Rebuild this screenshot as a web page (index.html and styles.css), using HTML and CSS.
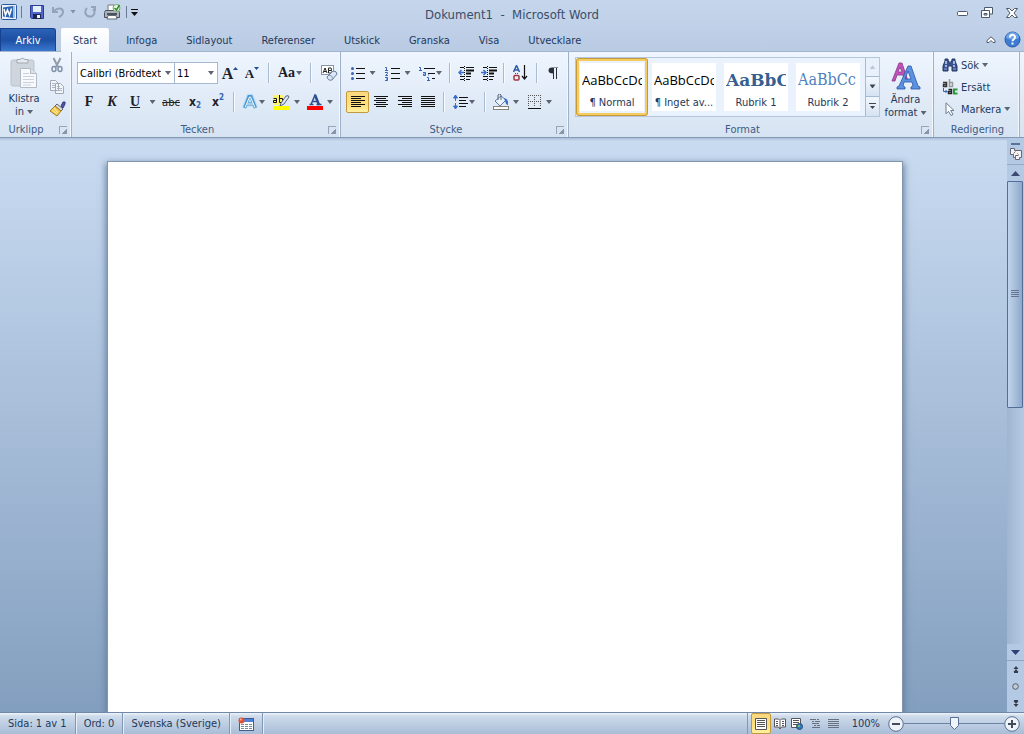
FILE: index.html
```html
<!DOCTYPE html>
<html lang="sv">
<head>
<meta charset="utf-8">
<meta name="viewport" content="width=device-width, initial-scale=1">
<title>Dokument1 - Microsoft Word</title>
<link rel="stylesheet" href="styles.css">
</head>
<body>
<header class="titlebar">
  <div class="quick">
    <button class="app" aria-label="Word"><svg width="16" height="18" viewBox="0 0 16 18"><rect x=".5" y="1.500" width="15" height="15" rx="1" fill="#e9f2fb" stroke="#2b5a9c"/><path d="M2 4.500l10-1.500v12l-10-1.500z" fill="#2c64b4"/><path d="M12 4h2M12 6h2M12 8h2M12 10h2M12 12h2M12 14h2" stroke="#5d8fcd"/><path d="M3 6l1.500 6L6.500 7l2 5L10.500 5.500" fill="none" stroke="#fff" stroke-width="1.500"/></svg></button>
    <span class="qsep"></span>
    <button class="save" aria-label="Spara"><svg width="14" height="14" viewBox="0 0 14 14"><path d="M.5.5h13v13h-12l-1-1z" fill="#5065c8" stroke="#2d3b91"/><path d="M3 1h8v6H3z" fill="#e6effc"/><path d="M3 9h8v5H3z" fill="#1d2752"/><path d="M7 10h3v3H7z" fill="#f2f4ff"/></svg></button>
    <button class="undo" aria-label="Ångra"><svg width="13" height="12" viewBox="0 0 13 12"><path d="M1 1v5h5M2 5C6 1 11 2 11 6c0 3-2 4-4 5" fill="none" stroke="#93a3bc" stroke-width="2"/></svg><i class="dd pale"></i></button>
    <button class="redo" aria-label="Gör om"><svg width="12" height="12" viewBox="0 0 12 12"><path d="M3 2C0 5 1 10 5.500 10.500S12 6 9 3M7 1h4v4" fill="none" stroke="#93a3bc" stroke-width="2"/></svg></button>
    <button class="print" aria-label="Snabbutskrift"><svg width="17" height="16" viewBox="0 0 17 16"><path d="M4 1h6v6H4z" fill="#fff" stroke="#707780"/><path d="M1.500 6.500h13l1 2v5h-15v-5z" fill="#adb3bb" stroke="#4c535c"/><path d="M3 9h10v2H3z" fill="#4a525d"/><path d="M4 11.500h8l1 3.500H3z" fill="#fff" stroke="#626a75"/><circle cx="12.500" cy="4" r="3.500" fill="#eef9e9" stroke="#73a765"/><path d="M10.500 4l2 2 3-5" fill="none" stroke="#2e8b2b" stroke-width="1.500"/></svg></button>
    <span class="qsep"></span>
    <button class="more" aria-label="Anpassa verktygsfältet"><svg width="7" height="7" viewBox="0 0 7 7"><path d="M0 0h7v1H0zM0 3h7L3.500 7z" fill="#111"/></svg></button>
  </div>
  <h1>Dokument1 &nbsp;-&nbsp; Microsoft Word</h1>
  <div class="window">
    <button aria-label="Minimera"><svg width="11" height="11" viewBox="0 0 11 11"><rect x=".5" y="4.500" width="10" height="4" rx="1" fill="#fff" stroke="#4d5968"/></svg></button>
    <button aria-label="Återställ"><svg width="12" height="11" viewBox="0 0 12 11"><path d="M3.500 3.500v-3h8v6.500h-3" fill="#fff" stroke="#4d5968"/><path d="M.5 3.500h8v7h-8z" fill="#fff" stroke="#4d5968"/><path d="M3 6.500h3v1.500H3z" fill="#bfcfe5" stroke="#4d5968"/></svg></button>
    <button aria-label="Stäng"><svg width="12" height="10" viewBox="0 0 12 10"><path d="M.5.5h3L6 3 8.500.5h3L8 5l3.500 4.500h-3L6 7 3.500 9.500h-3L4 5z" fill="#fff" stroke="#4d5968"/></svg></button>
  </div>
</header>

<nav class="tabs">
  <button class="file">Arkiv</button>
  <button class="tab active">Start</button>
  <button class="tab">Infoga</button>
  <button class="tab">Sidlayout</button>
  <button class="tab">Referenser</button>
  <button class="tab">Utskick</button>
  <button class="tab">Granska</button>
  <button class="tab">Visa</button>
  <button class="tab">Utvecklare</button>
  <div class="tabtools">
    <button aria-label="Minimera menyfliksområdet"><svg width="10" height="8" viewBox="0 0 10 8"><path d="M5 .8L9 4.500v2H7L5 4.500l-2 2H1v-2z" fill="#fff" stroke="#4d5968"/></svg></button>
    <button aria-label="Hjälp"><svg width="17" height="17" viewBox="0 0 17 17"><circle cx="8.500" cy="8.500" r="7.500" fill="#3d7bd2" stroke="#265aa8"/><path d="M2 7a6.500 6 0 0 1 13 0q-6 3-13 0z" fill="#6fa2e6"/><path d="M6 6.500C6 3 11 3 11 6.200c0 2-2.500 2-2.500 4" fill="none" stroke="#fff" stroke-width="2"/><path d="M7.500 11.500h2v2h-2z" fill="#fff"/></svg></button>
  </div>
</nav>

<section class="ribbon" aria-label="Start">
  <div class="group clip">
    <div class="clipbody">
      <button class="big paste"><svg width="28" height="32" viewBox="0 0 28 32"><rect x="1" y="3" width="23" height="26" rx="2" fill="#cfd5dc" stroke="#bac1ca"/><path d="M7 6V2.500h3Q12-.5 15 2.500h3V6z" fill="#e6e9ed" stroke="#a2a9b2"/><path d="M10.500 11.500h10l6 5v14h-16z" fill="#f7f9fc" stroke="#b2bac5"/><path d="M20.500 11.500v5h6" fill="#dce2ea" stroke="#b2bac5"/><path d="M13 16.500h6M13 19.500h11M13 22.500h11M13 25.500h11M13 28h8" stroke="#cbd2dc"/></svg><span>Klistra<br>in <i class="dd"></i></span></button>
      <div class="clipside">
        <button aria-label="Klipp ut"><svg width="12" height="16" viewBox="0 0 12 16"><path d="M2.500 1l4.500 9M9.500 1L5 10" stroke="#939dab" stroke-width="2"/><ellipse cx="3" cy="12" rx="2" ry="2.500" fill="none" stroke="#8393ab" stroke-width="1.500"/><ellipse cx="9" cy="12" rx="2" ry="2.500" fill="none" stroke="#8393ab" stroke-width="1.500"/></svg></button>
        <button aria-label="Kopiera"><svg width="16" height="14" viewBox="0 0 16 14"><path d="M1.500.5h5l3 3v7h-8zM6.500 3.500h5l3 3v7h-8z" fill="#f2f5f9" stroke="#a0a9b5"/><path d="M3 3.500h3M3 5.500h3M3 7.500h3M8 6.500h3M8 8.500h5M8 10.500h5" stroke="#aeb6c1"/></svg></button>
        <button aria-label="Hämta format"><svg width="17" height="16" viewBox="0 0 17 16"><path d="M12 5l2-4q3-1 2 2l-2 4z" fill="#4d55a6" stroke="#353c83"/><path d="M8 3l6 5-2 2-6-5z" fill="#dedede" stroke="#61636b"/><path d="M6 5l6 5-4 5-7-5z" fill="#f3c94e" stroke="#a37a24"/><path d="M3 9l5 4M5 7l4 5" stroke="#fff1a4"/></svg></button>
      </div>
    </div>
    <footer><h2>Urklipp</h2><button class="launch" aria-label="Urklipp, mer"></button></footer>
  </div>

  <div class="group font">
    <div class="row font1">
      <label class="combo"><select aria-label="Teckensnitt"><option>Calibri (Brödtext)</option></select></label>
      <label class="combo"><select aria-label="Teckenstorlek"><option>11</option></select></label>
      <button class="serif grow" aria-label="Öka teckenstorlek">A<svg width="5" height="14" viewBox="0 0 5 14"><path d="M0 3h5L2.500 0z" fill="#274b91"/></svg></button>
      <button class="serif shrink" aria-label="Minska teckenstorlek">A<svg width="5" height="14" viewBox="0 0 5 14"><path d="M0 0h5L2.500 3z" fill="#274b91"/></svg></button>
      <span class="sep"></span>
      <button class="serif aa" aria-label="Ändra skiftläge">Aa<i class="dd"></i></button>
      <span class="sep"></span>
      <button class="clear" aria-label="Radera formatering"><svg width="17" height="16" viewBox="0 0 17 16"><rect x=".5" y=".5" width="12" height="9" fill="#fff" stroke="#8895aa"/><path d="M2 8l2-5 2 5M3 6.500h2M7.500 8V3H10q1 1 0 2.500H8h2.500q1 1 0 2.500z" fill="none" stroke="#222"/><path d="M6 12l6-6q4 0 4 3l-5 6q-4 1-5-3z" fill="#dce6f5" stroke="#667b9d"/><path d="M8 10q3 0 4 4" fill="none" stroke="#8095b6"/></svg></button>
    </div>
    <div class="row font2">
      <button class="serif" aria-label="Fet">F</button>
      <button class="serif italic" aria-label="Kursiv">K</button>
      <button class="serif under" aria-label="Understruken">U</button>
      <button aria-label="Understrykningsformat"><i class="dd"></i></button>
      <button class="strike" aria-label="Genomstruken">abc</button>
      <button class="script" aria-label="Nedsänkt">x<sub>2</sub></button>
      <button class="script" aria-label="Upphöjt">x<sup>2</sup></button>
      <span class="sep"></span>
      <button class="g2" aria-label="Texteffekter"><svg width="16" height="16" viewBox="0 0 16 16"><path d="M2.500 14L7 2h2l4.500 12M5 10h6" fill="none" stroke="#a6d8f6" stroke-width="5" stroke-linejoin="round" opacity=".7"/><path d="M2.500 14L7 2.500h2L13.500 14M5 10h6" fill="none" stroke="#4a98d0" stroke-width="3"/><path d="M3 13.500L7.500 3h1L13 13.500M5 10h6" fill="none" stroke="#fff"/></svg><i class="dd"></i></button>
      <button class="g5" aria-label="Överstrykningsfärg"><svg width="17" height="16" viewBox="0 0 17 16"><path d="M0 1h10v10H0z" fill="#fff36b"/><path d="M.5 4.500h3v4h-3v-2h3M6.500 1v7.500h3v-4h-3" fill="none" stroke="#111"/><path d="M8 9l5-7q3-1 3 1l-5 7-4 2z" fill="#dce8f8" stroke="#56667f"/><path d="M0 12h16v4H0z" fill="#ff0"/></svg><i class="dd"></i></button>
      <button class="g5" aria-label="Teckenfärg"><svg width="16" height="16" viewBox="0 0 16 16"><path d="M4 10.500L8 1l4 9.500M5.500 7.500h5M2.500 10.500h4M9.500 10.500h5" fill="none" stroke="#2d4f91" stroke-width="1.500"/><path d="M8 1l4 10" stroke="#2d4f91" stroke-width="2.500"/><path d="M0 12h16v4H0z" fill="red"/></svg><i class="dd"></i></button>
    </div>
    <footer><h2>Tecken</h2><button class="launch" aria-label="Tecken, mer"></button></footer>
  </div>

  <div class="group para">
    <div class="row para1">
      <button class="g6" aria-label="Punktlista"><svg width="14" height="14" viewBox="0 0 14 14"><path d="M5 2.500h9M5 7.500h9M5 12.500h9" stroke="#111"/><g fill="#3a63b4"><circle cx="1.500" cy="2.500" r="1.500"/><circle cx="1.500" cy="7.500" r="1.500"/><circle cx="1.500" cy="12.500" r="1.500"/></g></svg><i class="dd"></i></button>
      <button class="g6" aria-label="Numrerad lista"><svg width="15" height="15" viewBox="0 0 15 15"><path d="M6 2.500h9M6 7.500h9M6 12.500h9" stroke="#111"/><path d="M0 1.500h1.500v3M0 4.500h3M0 6.500h2.500v1L.5 9.500H3M0 11.500h2.500v3H0M1 13h1" fill="none" stroke="#3a63b4"/></svg><i class="dd"></i></button>
      <button class="g0" aria-label="Lista med flera nivåer"><svg width="17" height="15" viewBox="0 0 17 15"><path d="M5 2.500h11M9 7.500h7M13 12.500h3" stroke="#111"/><path d="M0 1.500h1.500v3M0 4.500h3M4 6.500h2.500v3H4.500V8H6M8 11.500h1.500v3M8 14.500h3M9 9h1" fill="none" stroke="#3a63b4"/></svg><i class="dd"></i></button>
      <span class="sep"></span>
      <button aria-label="Minska indrag"><svg width="16" height="15" viewBox="0 0 16 15"><path d="M2 1.500h4M8 1.500h8M8 10.500h5M2 13.500h4M8 13.500h4M2 10.500h4" stroke="#111"/><path d="M8 4.500h8M8 7.500h5" stroke="#111" stroke-width="2"/><path d="M6.500 0v15" stroke="#111" stroke-dasharray="1 1"/><path d="M6 6.500H1M3.500 4L1 6.500 3.500 9" fill="none" stroke="#3c6dc8" stroke-width="1.500"/></svg></button>
      <button aria-label="Öka indrag"><svg width="16" height="15" viewBox="0 0 16 15"><path d="M2 1.500h4M8 1.500h8M8 10.500h5M2 13.500h4M8 13.500h4M2 10.500h4" stroke="#111"/><path d="M8 4.500h8M8 7.500h5" stroke="#111" stroke-width="2"/><path d="M6.500 0v15" stroke="#111" stroke-dasharray="1 1"/><path d="M0 6.500h5M2.500 4L5 6.500 2.500 9" fill="none" stroke="#3c6dc8" stroke-width="1.500"/></svg></button>
      <span class="sep"></span>
      <button aria-label="Sortera"><svg width="15" height="16" viewBox="0 0 15 16"><path d="M.5 7L3.500.5l3 6.500M1.500 5h4" fill="none" stroke="#3158a6" stroke-width="1.500"/><rect x="1" y="10.500" width="5" height="4.500" rx="1" fill="none" stroke="#a2373b" stroke-width="1.500"/><path d="M2 8.500h1M4 8.500h1" stroke="#a2373b"/><path d="M11.500 0v13M9 11l2.500 3 2.500-3" fill="none" stroke="#111" stroke-width="1.200"/></svg></button>
      <span class="sep"></span>
      <button aria-label="Visa alla"><svg width="11" height="12" viewBox="0 0 11 12"><path d="M10 .5H4Q.5.500.5 3.500T5 6.500V12h1V1h2v11h1V1h1z" fill="#2c3138"/></svg></button>
    </div>
    <div class="row para2">
      <button class="on" aria-label="Vänsterjustera"><svg width="14" height="12" viewBox="0 0 14 12"><path d="M0 .5h14M0 2.500h10M0 4.500h14M0 6.500h10M0 8.500h14M0 10.500h10" stroke="#111"/></svg></button>
      <button aria-label="Centrera"><svg width="14" height="12" viewBox="0 0 14 12"><path d="M0 .5h14M2 2.500h10M0 4.500h14M2 6.500h10M0 8.500h14M2 10.500h10" stroke="#111"/></svg></button>
      <button aria-label="Högerjustera"><svg width="14" height="12" viewBox="0 0 14 12"><path d="M0 .5h14M4 2.500h10M0 4.500h14M4 6.500h10M0 8.500h14M4 10.500h10" stroke="#111"/></svg></button>
      <button aria-label="Marginaljustera"><svg width="14" height="12" viewBox="0 0 14 12"><path d="M0 .5h14M0 2.500h14M0 4.500h14M0 6.500h14M0 8.500h14M0 10.500h14" stroke="#111"/></svg></button>
      <span class="sep"></span>
      <button class="g2" aria-label="Radavstånd"><svg width="15" height="16" viewBox="0 0 15 16"><path d="M6 3.500h9M6 6.500h7M6 9.500h9M6 12.500h7" stroke="#111"/><path d="M2.500 1v6M2.500 9v6M.5 4l2-3 2 3zM.5 12l2 3 2-3z" fill="#3c6dc8" stroke="#3c6dc8"/></svg><i class="dd"></i></button>
      <span class="sep"></span>
      <button class="g5" aria-label="Fyllning"><svg width="16" height="16" viewBox="0 0 16 16"><path d="M2 7l6-5 5 4-6 6z" fill="#eaf2fc" stroke="#5f7aa4"/><path d="M5 6V1q2-2 3 0v5" fill="none" stroke="#56667f"/><path d="M11 4q5 1 4 7-2 0-3-4z" fill="#3c6dc8"/><rect x=".5" y="12.500" width="15" height="3" fill="#fff" stroke="#85827a"/></svg><i class="dd"></i></button>
      <button class="g6" aria-label="Kantlinjer"><svg width="13" height="14" viewBox="0 0 13 14"><path d="M0 .5h13M0 6.500h13M.5 0v12M6.500 0v12M12.500 0v12" stroke="#555" stroke-dasharray="1 1"/><path d="M0 13.500h13" stroke="#111"/></svg><i class="dd"></i></button>
    </div>
    <footer><h2>Stycke</h2><button class="launch" aria-label="Stycke, mer"></button></footer>
  </div>

  <div class="group format">
    <div class="formatbody">
      <div class="gallery">
        <button class="style chosen"><span class="card"><b class="sample">AaBbCcDc</b><span>¶ Normal</span></span></button>
        <button class="style"><span class="card"><b class="sample">AaBbCcDc</b><span>¶ Inget av...</span></span></button>
        <button class="style"><span class="card"><b class="sample h1s">AaBbCc</b><span>Rubrik 1</span></span></button>
        <button class="style"><span class="card"><b class="sample h2s">AaBbCc</b><span>Rubrik 2</span></span></button>
        <div class="gallerynav">
          <button class="off" aria-label="Upp"><i class="dd up"></i></button>
          <button aria-label="Ned"><i class="dd dark"></i></button>
          <button aria-label="Mer"><svg width="7" height="7" viewBox="0 0 7 7"><path d="M0 0h7v1H0zM1 3h5L3.500 6z" fill="#445"/></svg></button>
        </div>
      </div>
      <button class="big change"><svg width="30" height="28" viewBox="0 0 30 28"><path d="M1 19L8 1h3l6 18h-3l-2-6H6l-2 6zM7 10h4L9 5z" fill="#c451bd" stroke="#853985" stroke-width=".8"/><path d="M6 27v-2l2-1L17 4h3l7 20 2 1v2h-9v-2l2-1-1-4h-8l-1 4 2 1v2zM14 17h6L17 9z" fill="#5b92e2" stroke="#2854a4" stroke-width=".8"/></svg><span>Ändra<br>format <i class="dd"></i></span></button>
    </div>
    <footer><h2>Format</h2><button class="launch" aria-label="Format, mer"></button></footer>
  </div>

  <div class="group edit">
    <div class="editlist">
      <button><svg width="16" height="14" viewBox="0 0 16 14"><path d="M3 1h3v2h1v2h2V3h1V1h3v2l2 5v5h-5V8H6v5H1V8l2-5z" fill="#3c5591" stroke="#263967"/><path d="M3 8h2M11 8h2M4 3v3M12 3v3" stroke="#c5d6f5" stroke-width="1.500"/><path d="M2 11h3M11 11h3" stroke="#8ca7d9"/></svg>Sök <i class="dd"></i></button>
      <button><svg width="16" height="16" viewBox="0 0 16 16"><path d="M1 3.500h3.500v4h-3V5.500h3" fill="none" stroke="#333" stroke-width="1.500"/><path d="M7.500 0v7.500h3v-4h-3" fill="none" stroke="#999" stroke-width="1.500"/><path d="M1.500 9v3.500H5M3.500 11L5 12.500 3.500 14" fill="none" stroke="#3464b2"/><path d="M6.500 10.500h3v4h-3v-2h3" fill="none" stroke="#222" stroke-width="1.500"/><path d="M15.500 10.500H12v4h3.500" fill="none" stroke="#2a9b38" stroke-width="2"/></svg>Ersätt</button>
      <button><svg width="16" height="14" viewBox="0 0 16 14"><path d="M4 .8v11l2.500-2.500L9 13.500l2-1-2.300-4H12z" fill="#fff" stroke="#6b7a96"/></svg>Markera <i class="dd"></i></button>
    </div>
    <footer><h2>Redigering</h2></footer>
  </div>
</section>

<main class="work">
  <div class="canvas"><article class="page" aria-label="Dokument"></article></div>
  <aside class="scroll" aria-label="Rullningslist">
    <div class="split"></div>
    <button class="ruler" aria-label="Linjal"><svg width="12" height="13" viewBox="0 0 12 13"><path d="M.5.5h4v2h7v7h-2v2h-4v-2h-2v-3h-3z" fill="#f4f2f2" stroke="#667"/><path d="M3.500 5.500l2-2M7.500 5.500l1 1M5.500 9.500v-2h3" fill="none" stroke="#667"/></svg></button>
    <button class="arrow" aria-label="Uppåt"><svg width="9" height="5" viewBox="0 0 9 5"><path d="M0 5h9L4.500 0z" fill="#3c4a70"/></svg></button>
    <div class="track"><div class="thumb"><svg width="8" height="8" viewBox="0 0 8 8"><path d="M0 .5h8M0 2.500h8M0 4.500h8M0 6.500h8" stroke="#66758d"/></svg></div></div>
    <button class="arrow" aria-label="Nedåt"><svg width="9" height="5" viewBox="0 0 9 5"><path d="M0 0h9L4.500 5z" fill="#2d4175"/></svg></button>
    <div class="browse">
      <button aria-label="Föregående sida"><svg width="6" height="7" viewBox="0 0 6 7"><path d="M3 0l2.500 3h-5zM3 3l2.500 3h-5zM1 6h4v1H1z" fill="#333c4a"/></svg></button>
      <button aria-label="Välj bläddringsobjekt"><svg width="7" height="7" viewBox="0 0 7 7"><circle cx="3.500" cy="3.500" r="2.800" fill="#c3cbd2" stroke="#555f6c"/></svg></button>
      <button aria-label="Nästa sida"><svg width="6" height="7" viewBox="0 0 6 7"><path d="M3 7L.5 4h5zM3 4L.5 1h5zM1 0h4v1H1z" fill="#333c4a"/></svg></button>
    </div>
  </aside>
</main>

<footer class="status">
  <button>Sida: 1 av 1</button>
  <button>Ord: 0</button>
  <button>Svenska (Sverige)</button>
  <button aria-label="Makroinspelning"><svg width="16" height="14" viewBox="0 0 16 14"><rect x="1.500" y="1.500" width="14" height="12" fill="#fff" stroke="#425b91"/><path d="M2 2h13v3H2z" fill="#4e80d9"/><path d="M3 7.500h11M3 9.500h11M3 11.500h11" stroke="#7d8796" stroke-dasharray="3 1"/><circle cx="3.500" cy="3.500" r="3" fill="#df5131"/><circle cx="2.800" cy="2.500" r="1" fill="#ffb29b"/></svg></button>
  <div class="views">
    <button class="on" aria-label="Utskriftslayout"><svg width="12" height="12" viewBox="0 0 12 12"><path d="M.5.5h11v11H.5z" fill="#fff" stroke="#555"/><path d="M2 2.500h8M2 4.500h8M2 6.500h8M2 8.500h8" stroke="#555"/></svg></button>
    <button aria-label="Helskärmsläsning"><svg width="12" height="12" viewBox="0 0 12 12"><path d="M.5 1h4L6 2.500 7.500 1h4v8h-4L6 11 4.500 9h-4zM6 3v7" fill="#fff" stroke="#555"/><path d="M2 3.500h2M2 5.500h2M2 7.500h2M8 3.500h2M8 5.500h2M8 7.500h2" stroke="#555"/></svg></button>
    <button aria-label="Webblayout"><svg width="12" height="12" viewBox="0 0 12 12"><path d="M.5.5h9v9h-9z" fill="#fff" stroke="#555"/><path d="M2 2.500h6M2 4.500h6M2 6.500h4" stroke="#555"/><circle cx="8.500" cy="8.500" r="3" fill="#3978b7" stroke="#1e4b77"/><path d="M7 7h2v2H7z" fill="#71bd67"/></svg></button>
    <button aria-label="Disposition"><svg width="10" height="10" viewBox="0 0 10 10"><path d="M0 .5h6M7 .5h2M2 2.500h2M5 2.500h5M2 4.500h7M4 6.500h2M7 6.500h3M2 8.500h8" stroke="#67707e"/></svg></button>
    <button aria-label="Utkast"><svg width="11" height="10" viewBox="0 0 11 10"><path d="M0 .5h11M0 2.500h11M0 4.500h11M0 6.500h11M0 8.500h11" stroke="#67707e"/></svg></button>
  </div>
  <button class="percent">100%</button>
  <div class="zoom">
    <button aria-label="Zooma ut"><svg width="16" height="16" viewBox="0 0 16 16"><circle cx="8" cy="8" r="7.300" fill="#eef3fa" stroke="#596e90"/><path d="M4 8h8" stroke="#414c5d" stroke-width="2"/></svg></button>
    <input type="range" aria-label="Zoomnivå" min="0" max="100" value="51">
    <button aria-label="Zooma in"><svg width="16" height="16" viewBox="0 0 16 16"><circle cx="8" cy="8" r="7.300" fill="#eef3fa" stroke="#596e90"/><path d="M4 8h8M8 4v8" stroke="#414c5d" stroke-width="2"/></svg></button>
  </div>
</footer>
</body>
</html>
```
FILE: styles.css
```css
* { box-sizing: border-box; }
html, body { height: 100%; }
body {
  margin: 0;
  display: flex;
  flex-direction: column;
  font: 11px/13px "DejaVu Sans Condensed", "Noto Sans", sans-serif;
  color: #1e395b;
  background: #b9cbe4;
  overflow: hidden;
}
button {
  margin: 0; padding: 0; border: 0; background: none;
  font: inherit; color: inherit;
  display: flex; align-items: center; justify-content: center;
}
svg { display: block; flex: none; }
h1, h2 { margin: 0; font-weight: normal; font-size: inherit; }

.dd { display: inline-block; flex: none; width: 6px; height: 4px; background: #5b6470; clip-path: polygon(0 0, 100% 0, 50% 100%); vertical-align: middle; }
.dd.up { clip-path: polygon(0 100%, 100% 100%, 50% 0); background: #b8c6d8; }
.dd.pale { background: #8291aa; }
.dd.dark { background: #3c4656; }

/* Title bar */
.titlebar { display: grid; grid-template-columns: 1fr auto 1fr; align-items: center; height: 28px; flex: none; background: linear-gradient(#c5d6ec, #bfd0e8); }
.titlebar h1 { font-size: 13px; line-height: 16px; padding-top: 2px; color: #3b4d69; }
.quick { display: flex; align-items: center; padding: 0 0 5px 1px; }
.qsep { width: 1px; height: 12px; background: #6a7b93; margin-left: 4px; }
.save { margin-left: 8px; }
.undo { margin-left: 8px; gap: 5px; }
.redo { margin-left: 8px; }
.print { margin-left: 8px; }
.quick .print + .qsep { margin-left: 5px; }
.more { margin-left: 4px; padding-top: 2px; }
.window { justify-self: end; display: flex; align-items: center; gap: 13px; padding: 0 6px 3px 0; }

/* Tabs */
.tabs { display: flex; gap: 5px; height: 24px; flex: none; background: linear-gradient(#bfd0e8, #b9cae3); border-bottom: 1px solid #a3b5ce; }
.file { width: 56px; color: #fff; border: 1px solid #16428f; border-bottom: 0; border-radius: 0 3px 0 0; background: linear-gradient(#2b62b6, #1d4fa2 50%, #3a78d0); }
.tab { padding: 1px 12px 0; }
.tab.active { margin-bottom: -1px; background: linear-gradient(#fff, #f0f6fe); border-radius: 2px 2px 0 0; }
.tabtools { margin-left: auto; display: flex; align-items: center; gap: 8px; padding-right: 3px; }

/* Ribbon */
.ribbon {
  display: grid; grid-template-columns: 72px 269px 228px 1fr 86px; padding-right: 4px;
  height: 86px; flex: none;
  background: linear-gradient(#eef5fe, #e2ecf8 50%, #d6e3f2);
  border-bottom: 1px solid #8499b7;
}
.group { display: flex; flex-direction: column; min-width: 0; border-right: 1px solid #9fb1c9; box-shadow: inset -1px 0 #f4f8fd; padding-left: 5px; }
.group footer { margin-top: auto; height: 15px; display: grid; grid-template-columns: 1fr 22px; align-items: center; color: #3e5b84; }
.group h2 { text-align: center; white-space: nowrap; }
.launch { width: 8px; height: 8px; justify-self: end; margin-right: 4px; border: solid #97a5b9; border-width: 1px 0 0 1px; background: linear-gradient(135deg, transparent 60%, #8796ab 60%); }
.row { display: grid; height: 22px; margin-top: 10px; align-items: stretch; }
.row + .row { margin-top: 7px; }
.sep { width: 1px; height: 20px; place-self: center; background: #a9bad1; box-shadow: 1px 0 #f7faff; }

.clip { padding-left: 0; }
.clip footer { grid-template-columns: 52px 19px; }
.clipbody { display: grid; grid-template-columns: 48px 18px; }
.big { flex-direction: column; justify-content: flex-start; }
.paste, .change { padding-top: 5px; gap: 3px; }
.clipside { display: flex; flex-direction: column; gap: 7px; padding-top: 5px; align-items: center; }

.font1 { grid-template-columns: 98px 43px 24px 20px 12px 32px 8px 26px; }
.font2 { grid-template-columns: 24px 22px 24px 11px 26px 22px 24px 6px 35px 31px 36px; }
.combo { position: relative; display: flex; min-width: 0; border: 1px solid #a5b8d2; background: #fff; }
.combo + .combo { border-left: 0; }
.combo::after { content: ""; position: absolute; right: 3px; top: 8px; width: 6px; height: 4px; background: #5b6470; clip-path: polygon(0 0, 100% 0, 50% 100%); pointer-events: none; }
.combo select { appearance: none; flex: 1; min-width: 0; border: 0; margin: 0 13px 0 2px; padding: 0; background: none; font: inherit; color: #000; text-overflow: clip; }
.serif { font: bold 14px/16px "Liberation Serif", serif; color: #1d2026; }
.grow { font-size: 16px; padding-top: 2px; }
.shrink { font-size: 13px; padding-top: 2px; }
.aa { gap: 1px; }
.clear { padding-left: 4px; }
.italic { font-style: italic; }
.under { text-decoration: underline; }
.strike { color: #222; text-decoration: line-through; }
.script { font-weight: bold; font-size: 12px; color: #1d2026; }
.script sub, .script sup { font-size: 8px; line-height: 8px; color: #3464b2; }
.script sub { align-self: flex-end; padding-bottom: 3px; }
.script sup { align-self: flex-start; padding-top: 3px; }
.g0 { gap: 0; }
.g2 { gap: 1px; }
.g5 { gap: 4px; }
.g6 { gap: 5px; }

.para1 { grid-template-columns: 34px 35px 31px 6px 28px 18px 10px 24px 8px 26px; }
.para2 { grid-template-columns: 23px 24px 24px 22px 8px 34px 7px 36px 32px; }
.on { border: 1px solid #c29a3d; border-radius: 2px; background: linear-gradient(#fbd880, #ffe07a 60%, #fff0a0); }

.formatbody { display: flex; padding: 5px 0 0 1px; }
.gallery { display: flex; flex: 1; height: 60px; border: 1px solid #b5c6dd; background: #eaf3fd; min-width: 0; }
.style { width: 72px; height: 58px; }
.card { width: 64px; height: 48px; background: #fff; display: flex; flex-direction: column; justify-content: space-between; align-items: center; padding: 8px 2px 2px; overflow: hidden; white-space: nowrap; }
.chosen { border: 3px solid #f6cc5c; border-radius: 3px; outline: 1px solid #c59a3c; outline-offset: -1px; }
.sample { width: 60px; overflow: hidden; font: 13px/18px "Open Sans", sans-serif; color: #000; text-align: left; }
.h1s { font: bold 17px/18px "DejaVu Serif", serif; color: #365f91; }
.h2s { font: 16px/18px "DejaVu Serif Condensed", "DejaVu Serif", serif; color: #4f81bd; }
.gallerynav { margin-left: auto; width: 14px; display: grid; grid-template-rows: repeat(3, 1fr); }
.gallerynav button { border: solid #a7bad3; border-width: 0 0 1px 1px; background: linear-gradient(#f2f7fe, #d5e2f2); }
.gallerynav .off { background: #e8f1fb; }
.gallerynav button:last-child { border-bottom: 0; }
.change { width: 53px; padding-right: 2px; white-space: nowrap; }

.edit { padding-left: 8px; }
.editlist { display: flex; flex-direction: column; gap: 4px; padding-top: 4px; }
.editlist button { height: 18px; justify-content: flex-start; gap: 3px; white-space: nowrap; }
.edit footer { grid-template-columns: 1fr 6px; }

/* Document area */
.work { flex: 1; display: flex; min-height: 0; background: linear-gradient(#a9bdd7, #c9dbf1 3px, #a3bad6 55%, #839fbf); }
.canvas { flex: 1; min-width: 0; display: flex; justify-content: center; padding: 24px 0 0 2px; overflow: hidden; }
.page { width: 794px; background: #fff; box-shadow: 0 0 0 1px #8494ad, 0 3px 7px 2px #647b9a; }
.scroll { width: 17px; display: flex; flex-direction: column; background: #b4c9e4; }
.split { height: 7px; flex: none; margin: 0 4px; border-bottom: 2px solid #5a7297; }
.ruler { height: 20px; border-bottom: 1px solid #94abc8; flex: none; }
.arrow { height: 16px; flex: none; }
.track { flex: 1; background: linear-gradient(90deg, #9fb6d2, #b5cae4); }
.thumb { height: 49%; border: 1px solid #536e98; border-radius: 1px; background: linear-gradient(90deg, #bfd3ec, #a8bfdb 50%, #8da8c9); display: flex; align-items: center; justify-content: center; margin-right: 1px; }
.browse { height: 52px; flex: none; border-top: 1px solid #8ea6c5; display: flex; flex-direction: column; justify-content: space-around; }

/* Status bar */
.status { display: flex; height: 22px; flex: none; border-top: 1px solid #7288a8; background: linear-gradient(#eef4fb, #cedbeb 15%, #a9bdd7); white-space: nowrap; }
.status > button { padding: 0 8px; border-right: 1px solid #8197b5; box-shadow: 1px 0 #e4edf8; }
.views { margin-left: auto; border-left: 1px solid #8197b5; padding-left: 3px; display: grid; grid-template-columns: 20px 18px 17px 19px 18px; }
.status > .percent { border: 0; box-shadow: none; padding: 0 8px 0 9px; }
.zoom { display: flex; align-items: center; padding-right: 4px; }
.zoom input { appearance: none; width: 100px; height: 16px; margin: 0; background: linear-gradient(#6d83a5, #6d83a5) center / 100% 1px no-repeat; }
.zoom input::-webkit-slider-thumb { appearance: none; width: 9px; height: 13px; background: url("data:image/svg+xml,%3Csvg xmlns='http://www.w3.org/2000/svg' width='9' height='13'%3E%3Cpath d='M.5.500h8v8l-4 4-4-4z' fill='%23f0f4fa' stroke='%23596e90'/%3E%3C/svg%3E"); }
```
